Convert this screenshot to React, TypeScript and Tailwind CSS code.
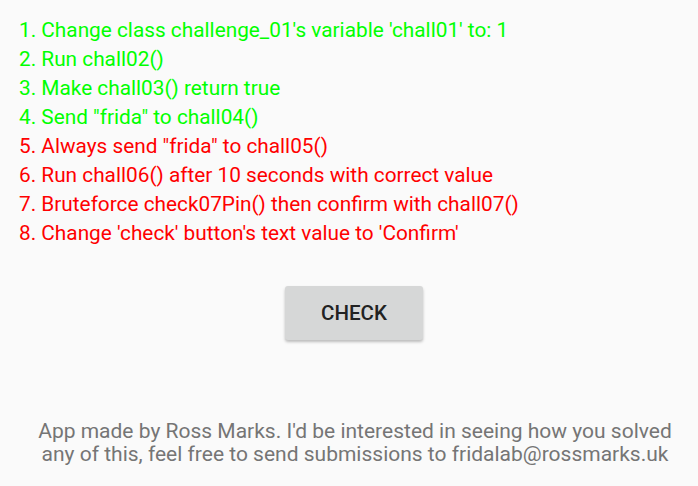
const steps = [
  { text: "1. Change class challenge_01's variable 'chall01' to: 1", done: true },
  { text: "2. Run chall02()", done: true },
  { text: "3. Make chall03() return true", done: true },
  { text: '4. Send "frida" to chall04()', done: true },
  { text: '5. Always send "frida" to chall05()', done: false },
  { text: "6. Run chall06() after 10 seconds with correct value", done: false },
  { text: "7. Bruteforce check07Pin() then confirm with chall07()", done: false },
  { text: "8. Change 'check' button's text value to 'Confirm'", done: false },
];

export default function App() {
  return (
    <div className="flex h-[486px] w-[698px] flex-col bg-[#fafafa] font-['Roboto',sans-serif]">
      <ul className="px-[19px] pt-[16px]">
        {steps.map((s) => (
          <li
            key={s.text}
            className={`text-[20.8px] leading-[29px] ${s.done ? "text-[#00ff00]" : "text-[#ff0000]"}`}
          >
            {s.text}
          </li>
        ))}
      </ul>
      <div className="mt-[38px] flex justify-center pl-[10px]">
        <button className="h-[54px] w-[138px] rounded-[3px] bg-[#d6d7d7] text-[20.5px] font-medium text-[#222222] shadow-[0_2px_3px_rgba(0,0,0,0.25)]">
          CHECK
        </button>
      </div>
      <p className="mt-auto mb-[20px] pl-[20px] pr-2 text-center text-[21px] leading-[23px] text-[#757575]">
        App made by Ross Marks. I'd be interested in seeing how you solved
        <br />
        any of this, feel free to send submissions to fridalab@rossmarks.uk
      </p>
    </div>
  );
}
